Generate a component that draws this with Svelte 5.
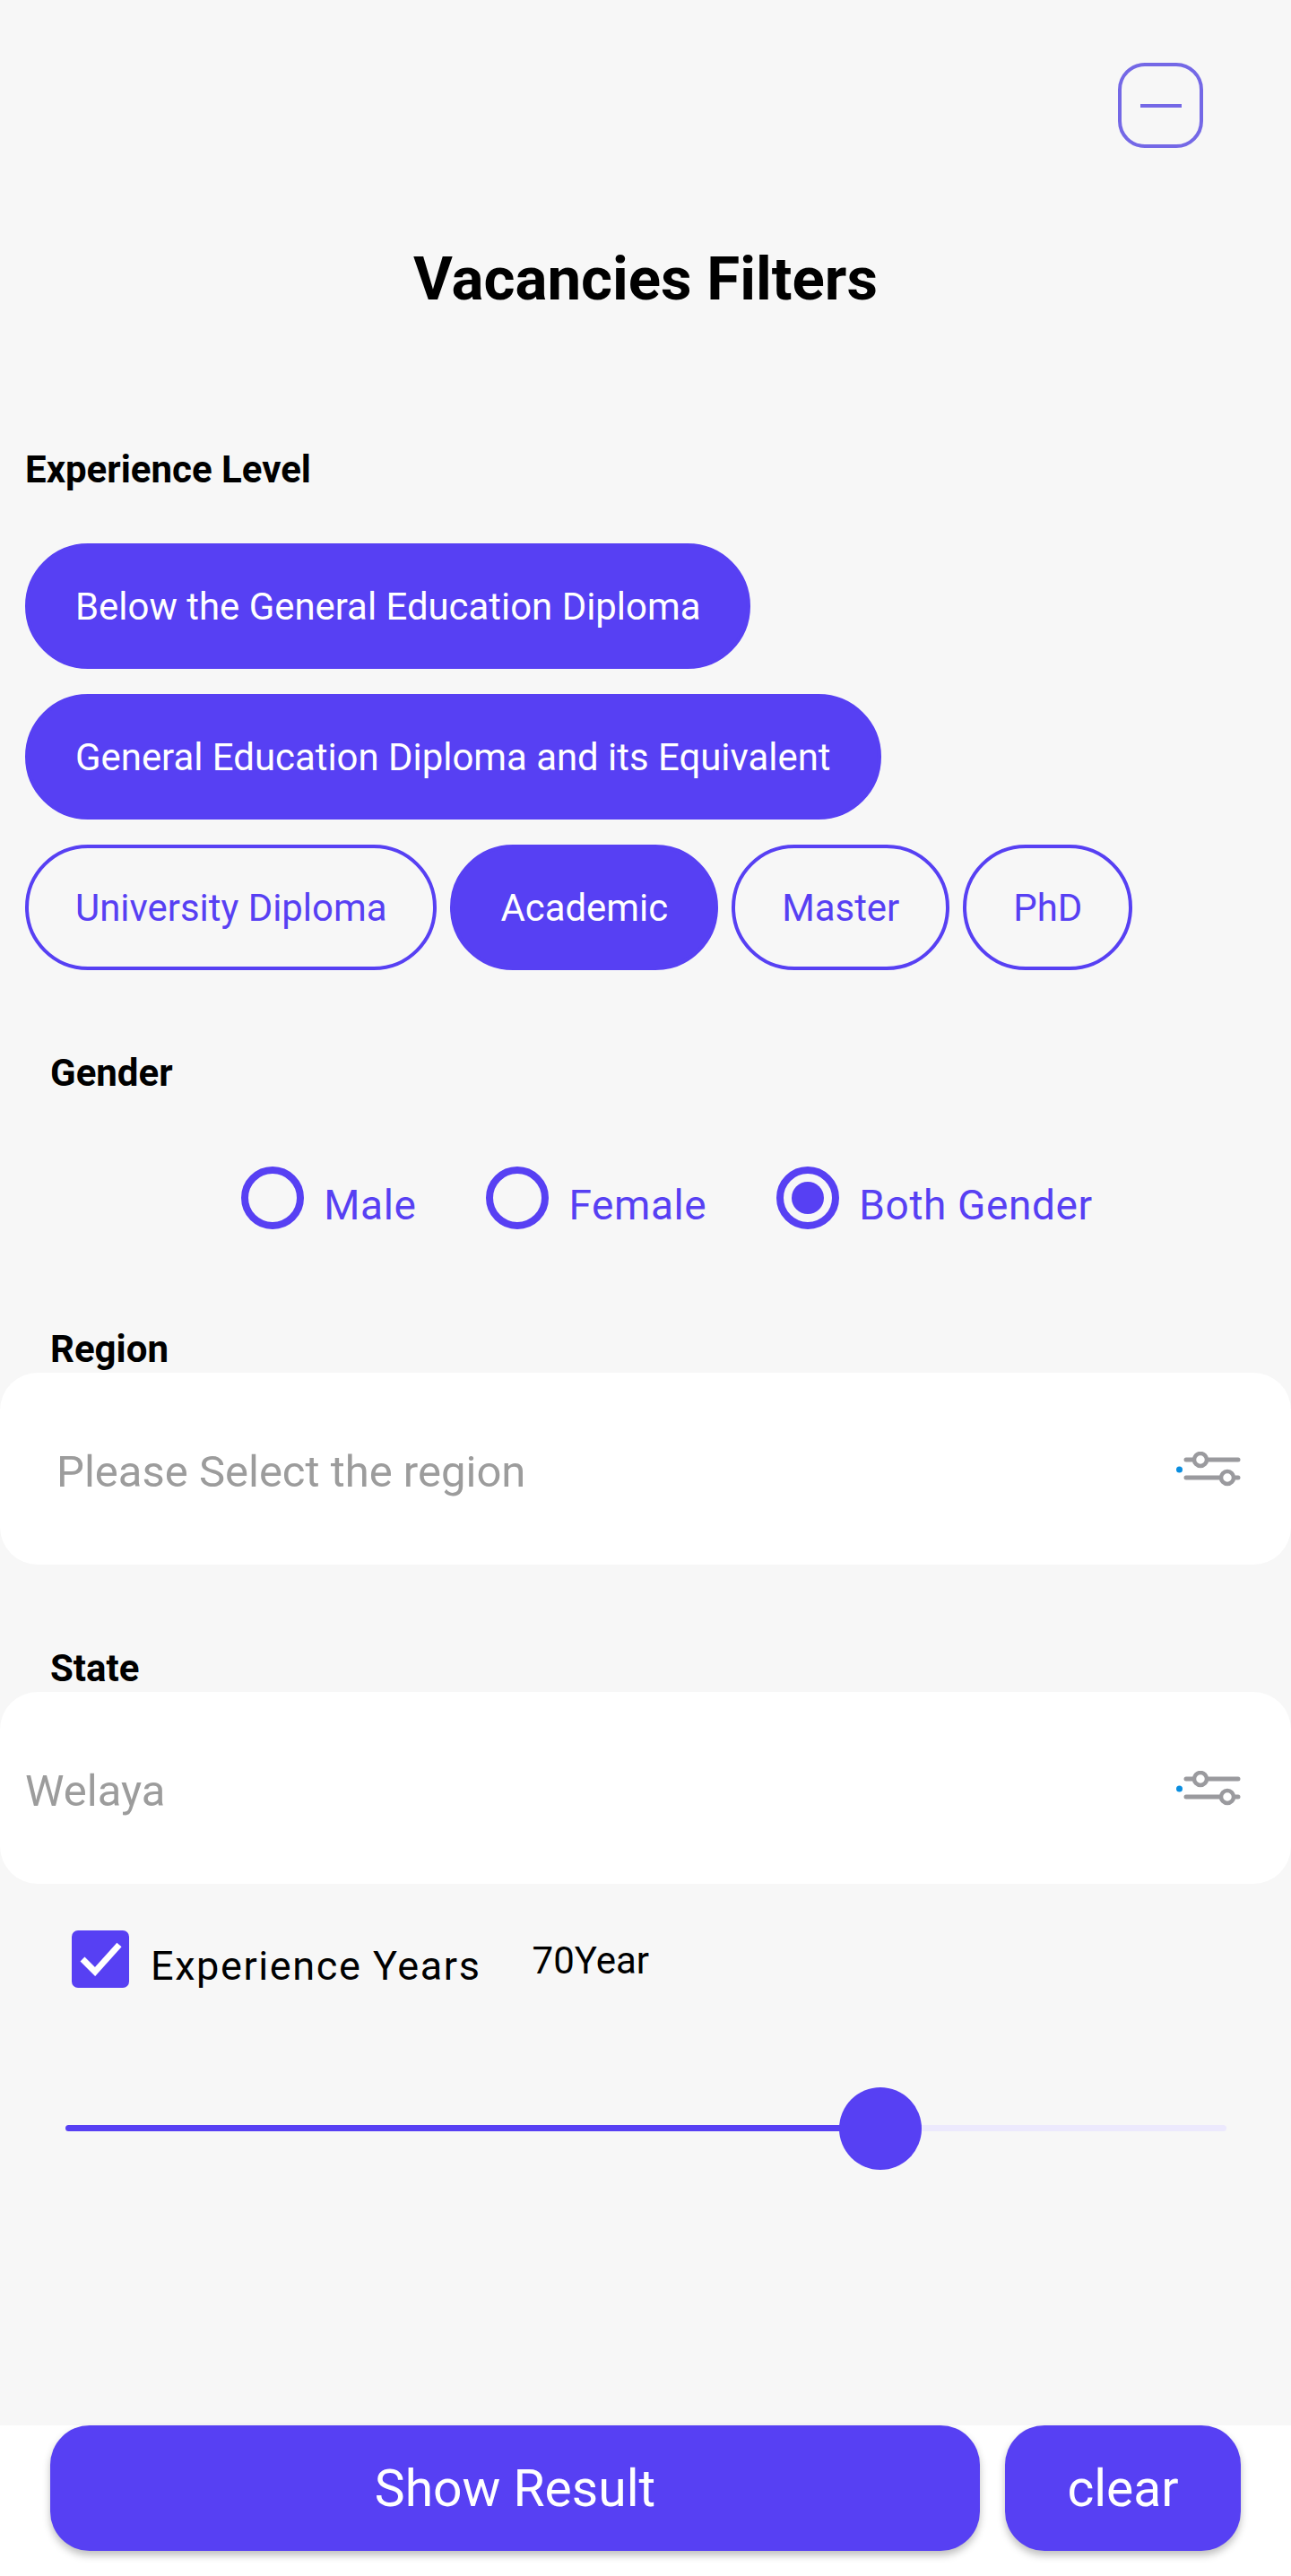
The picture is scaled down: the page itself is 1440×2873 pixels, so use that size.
<script lang="ts">
  const levels = [
    { label: 'Below the General Education Diploma', active: true },
    { label: 'General Education Diploma and its Equivalent', active: true },
    { label: 'University Diploma', active: false },
    { label: 'Academic', active: true },
    { label: 'Master', active: false },
    { label: 'PhD', active: false },
  ];

  const genders = [
    { label: 'Male', checked: false },
    { label: 'Female', checked: false },
    { label: 'Both Gender', checked: true },
  ];

  const years = 70.2;
</script>

{#snippet filterIcon()}
  <svg class="filter-icon" width="72" height="40" viewBox="0 0 72 40" aria-hidden="true">
    <circle cx="3.5" cy="20" r="3.5" fill="#0a8ee0" />
    <path d="M11 9H69M11 29H69" stroke="#9a9a9e" stroke-width="5" stroke-linecap="round" />
    <circle cx="27" cy="9" r="7" fill="#fff" stroke="#9a9a9e" stroke-width="4.5" />
    <circle cx="57" cy="29" r="7" fill="#fff" stroke="#9a9a9e" stroke-width="4.5" />
  </svg>
{/snippet}

<div class="page">
  <main class="content">
    <div class="top">
      <button class="collapse" aria-label="Collapse"><span class="dash"></span></button>
    </div>

    <h1>Vacancies Filters</h1>

    <h2 class="level-title">Experience Level</h2>
    <div class="chips">
      {#each levels as level}
        <button class="chip" class:active={level.active}>{level.label}</button>
      {/each}
    </div>

    <h2 class="gender-title">Gender</h2>
    <div class="radios">
      {#each genders as gender}
        <label class="radio">
          <span class="dot" class:checked={gender.checked}></span>
          <span class="radio-text">{gender.label}</span>
        </label>
      {/each}
    </div>

    <h2 class="region-title">Region</h2>
    <div class="select region">
      <span class="select-text">Please Select the region</span>
      {@render filterIcon()}
    </div>

    <h2 class="state-title">State</h2>
    <div class="select state">
      <span class="select-text">Welaya</span>
      {@render filterIcon()}
    </div>

    <div class="years">
      <span class="check">
        <svg width="47" height="38" viewBox="0 0 47 38" aria-hidden="true">
          <path d="M3 19L17 33L44 3" fill="none" stroke="#fff" stroke-width="7" />
        </svg>
      </span>
      <span class="years-label">Experience Years</span>
      <span class="years-value">70Year</span>
    </div>

    <div class="slider">
      <div class="track">
        <div class="fill" style="width: {years}%"></div>
        <div class="thumb" style="left: {years}%"></div>
      </div>
    </div>
  </main>

  <footer class="actions">
    <button class="action show">Show Result</button>
    <button class="action clear">clear</button>
  </footer>
</div>

<style>
  :global(body) {
    margin: 0;
    background: #f7f7f7;
  }

  .page {
    height: 2873px;
    display: flex;
    flex-direction: column;
    font-family: Roboto, sans-serif;
    background: #f7f7f7;
    overflow: hidden;
  }

  .content {
    flex: 1;
  }

  button {
    font-family: inherit;
    cursor: pointer;
  }

  .top {
    display: flex;
    justify-content: flex-end;
    padding: 70px 98px 0 0;
  }

  .collapse {
    width: 95px;
    height: 95px;
    box-sizing: border-box;
    padding: 0;
    border: 4.5px solid #7468e6;
    border-radius: 30px;
    background: transparent;
    display: flex;
    align-items: center;
    justify-content: center;
  }

  .dash {
    width: 46px;
    height: 4px;
    background: #7468e6;
  }

  h1 {
    margin: 106px 0 0;
    font-size: 67.2px;
    line-height: 80px;
    font-weight: 700;
    text-align: center;
    color: #000;
  }

  h2 {
    margin: 0;
    font-size: 42px;
    line-height: 48px;
    font-weight: 700;
    color: #000;
  }

  .level-title {
    margin: 149px 0 0 28px;
  }

  .chips {
    display: flex;
    flex-wrap: wrap;
    gap: 28px 15px;
    margin: 58px 28px 0;
  }

  .chip {
    height: 140px;
    padding: 0 52px;
    box-sizing: border-box;
    border: 4px solid #5740f3;
    border-radius: 70px;
    background: transparent;
    color: #5740f3;
    font-size: 41.9px;
  }

  .chip.active {
    background: #5740f3;
    color: #fff;
  }

  .gender-title {
    margin: 91px 0 0 56px;
  }

  .radios {
    display: flex;
    justify-content: center;
    gap: 78px;
    margin-top: 79px;
    padding-left: 48px;
  }

  .radio {
    display: flex;
    align-items: center;
    gap: 22px;
  }

  .dot {
    width: 70px;
    height: 70px;
    box-sizing: border-box;
    border: 8px solid #5740f3;
    border-radius: 50%;
    display: flex;
    align-items: center;
    justify-content: center;
  }

  .dot.checked::after {
    content: '';
    width: 36px;
    height: 36px;
    border-radius: 50%;
    background: #5740f3;
  }

  .radio-text {
    font-size: 46px;
    line-height: 56px;
    letter-spacing: 0.6px;
    color: #5740f3;
    padding-top: 16px;
  }

  .region-title {
    margin: 109px 0 0 56px;
  }

  .state-title {
    margin: 92px 0 0 56px;
  }

  .select {
    height: 214px;
    margin-top: 2px;
    background: #fff;
    border-radius: 42px;
    display: flex;
    align-items: center;
    justify-content: space-between;
    padding-right: 56px;
    font-size: 49px;
    color: #9c9c9c;
  }

  .select-text {
    padding-top: 6px;
  }

  .region {
    padding-left: 63px;
  }

  .state {
    padding-left: 28px;
  }

  .filter-icon {
    margin-top: 2px;
  }

  .years {
    display: flex;
    align-items: flex-start;
    margin: 52px 0 0 80px;
  }

  .check {
    width: 64px;
    height: 64px;
    border-radius: 7px;
    background: #5740f3;
    display: flex;
    align-items: center;
    justify-content: center;
  }

  .years-label {
    margin: 12px 0 0 24px;
    font-size: 45px;
    line-height: 56px;
    letter-spacing: 1.6px;
    color: #000;
  }

  .years-value {
    margin: 8px 0 0 57px;
    font-size: 42px;
    line-height: 52px;
    color: #000;
  }

  .slider {
    margin: 149px 72px 0 73px;
  }

  .track {
    position: relative;
    height: 7px;
    border-radius: 4px;
    background: #ece9fd;
  }

  .fill {
    height: 100%;
    border-radius: 4px;
    background: #5740f3;
  }

  .thumb {
    position: absolute;
    top: 50%;
    width: 92px;
    height: 92px;
    border-radius: 50%;
    background: #5740f3;
    transform: translate(-50%, -50%);
  }

  .actions {
    height: 168px;
    box-sizing: border-box;
    display: flex;
    gap: 28px;
    padding: 0 56px;
    background: #fff;
  }

  .action {
    height: 140px;
    border: none;
    border-radius: 44px;
    background: #5740f3;
    color: #fff;
    font-size: 57px;
    box-shadow: 0 5px 9px rgba(0, 0, 0, 0.25);
  }

  .show {
    flex: 1;
  }

  .clear {
    width: 263px;
  }
</style>
